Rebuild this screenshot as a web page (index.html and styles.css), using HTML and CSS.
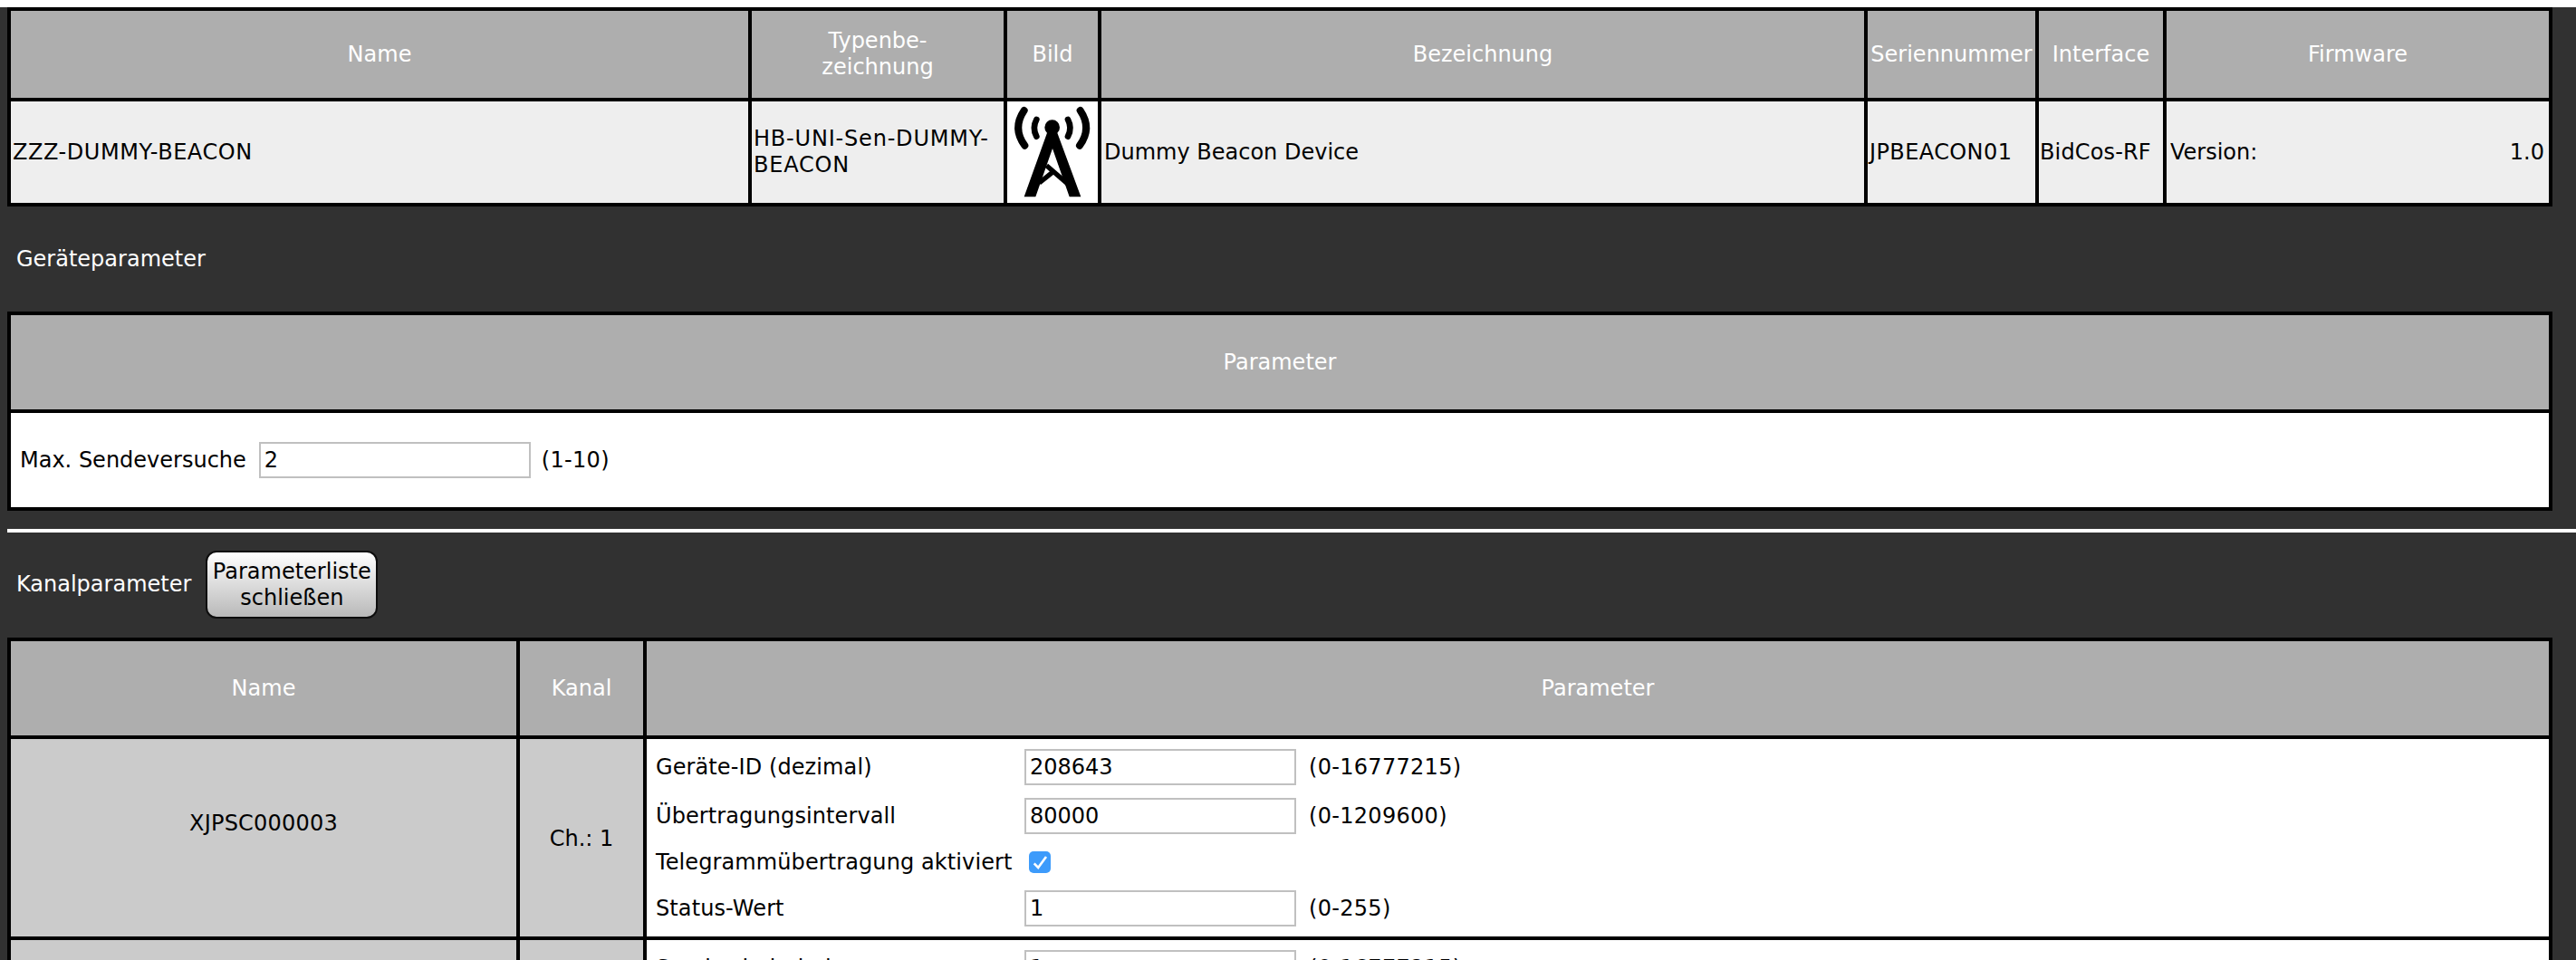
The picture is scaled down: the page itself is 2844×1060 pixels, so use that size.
FILE: index.html
```html
<!DOCTYPE html>
<html lang="de">
<head>
<meta charset="utf-8">
<title>Geräteparameter</title>
<link rel="stylesheet" href="styles.css">
</head>
<body>
<main class="page">
  <table class="grid device">
    <colgroup>
      <col class="d1"><col class="d2"><col class="d3"><col class="d4"><col class="d5"><col class="d6"><col class="d7">
    </colgroup>
    <thead>
      <tr>
        <th>Name</th><th>Typenbe-<br>zeichnung</th><th>Bild</th><th>Bezeichnung</th><th>Seriennummer</th><th>Interface</th><th>Firmware</th>
      </tr>
    </thead>
    <tbody>
      <tr>
        <td class="caps">ZZZ-DUMMY-BEACON</td>
        <td class="caps-wide">HB-UNI-Sen-DUMMY-<br>BEACON</td>
        <td class="pic">
          <svg class="tower" viewBox="96 66 300 336" width="100" height="112" aria-hidden="true">
            <g fill="none" stroke="#000" stroke-linecap="round">
              <path d="M152 96Q112 155 154 212" stroke-width="24"/>
              <path d="M193 126Q178 154 193 182" stroke-width="20"/>
              <path d="M338 96Q378 155 336 212" stroke-width="24"/>
              <path d="M297 126Q312 154 297 182" stroke-width="20"/>
            </g>
            <circle cx="245" cy="152" r="25"/>
            <polygon points="228,170 152,382 190,382 246,222 302,382 340,382 262,170"/>
            <g fill="none" stroke="#000" stroke-width="16">
              <path d="M297 340L226 278"/>
              <path d="M252 296L202 336"/>
            </g>
          </svg>
        </td>
        <td>Dummy Beacon Device</td>
        <td class="serial">JPBEACON01</td>
        <td class="iface">BidCos-RF</td>
        <td><div class="fw"><span>Version:</span><span>1.0</span></div></td>
      </tr>
    </tbody>
  </table>

  <h2 class="title">Geräteparameter</h2>

  <table class="grid params">
    <thead><tr><th>Parameter</th></tr></thead>
    <tbody>
      <tr>
        <td class="white">
          <div class="inline-param">
            <label>Max. Sendeversuche</label>
            <input class="field" type="text" value="2">
            <span class="range-short">(1-10)</span>
          </div>
        </td>
      </tr>
    </tbody>
  </table>

  <div class="rule"></div>

  <div class="channel-head">
    <h2 class="subtitle">Kanalparameter</h2>
    <button class="btn" type="button">Parameterliste<br>schließen</button>
  </div>

  <table class="grid channels">
    <colgroup><col class="c1"><col class="c2"><col class="c3"></colgroup>
    <thead><tr><th>Name</th><th>Kanal</th><th>Parameter</th></tr></thead>
    <tbody>
      <tr>
        <td class="gray"><div class="chname">XJPSC000003</div></td>
        <td class="gray">Ch.: 1</td>
        <td class="white">
          <div class="plist">
            <label>Geräte-ID (dezimal)</label><input class="field" type="text" value="208643"><span class="range">(0-16777215)</span>
            <label>Übertragungsintervall</label><input class="field" type="text" value="80000"><span class="range">(0-1209600)</span>
            <label>Telegrammübertragung aktiviert</label>
            <span class="check"><svg viewBox="0 0 24 24" width="24" height="24" aria-hidden="true"><path d="M5.7 13.3L10.2 18L19 6" fill="none" stroke="#fff" stroke-width="2.6"/></svg></span><span></span>
            <label>Status-Wert</label><input class="field" type="text" value="1"><span class="range">(0-255)</span>
          </div>
        </td>
      </tr>
      <tr>
        <td class="gray"></td>
        <td class="gray"></td>
        <td class="white">
          <div class="plist">
            <label>Sendewiederholung</label><input class="field" type="text" value="1"><span class="range">(0-16777215)</span>
            <label></label><input class="field" type="text" value=""><span></span>
            <label></label><input class="field" type="text" value=""><span></span>
          </div>
        </td>
      </tr>
    </tbody>
  </table>
</main>
</body>
</html>
```
FILE: styles.css
```css
html {
  height: 100%;
  overflow: hidden;
  background: #fff;
}

body {
  margin: 8px 0 0;
  font-family: "DejaVu Sans", Verdana, sans-serif;
  font-size: 24px;
  line-height: 29px;
  color: #000;
}

.page {
  background: #313131;
  padding-left: 8px;
  min-height: 1052px;
}

.grid {
  width: 2810px;
  table-layout: fixed;
  border-collapse: separate;
  border-spacing: 4px;
  background: #000;
}

.grid th,
.grid td {
  padding: 0 2px;
}

.grid th {
  background: #aeaeae;
  color: #fff;
  font-weight: normal;
  text-align: center;
  white-space: nowrap;
}

.device th { height: 96px; padding: 0; }
.device td { height: 112px; background: #eee; }
.device td:nth-child(4) { padding-left: 3px; }
.device td:nth-child(7) { padding: 0 5px 0 4px; }
.device td.pic { background: #fff; padding: 0; line-height: 0; }
.device td.iface { padding-left: 1px; letter-spacing: 0.15px; }

.caps { letter-spacing: 0.55px; }
.caps-wide { letter-spacing: 0.8px; white-space: nowrap; }
.serial { letter-spacing: 0.4px; }

.d1 { width: 814px; }
.d2 { width: 278px; }
.d3 { width: 100px; }
.d4 { width: 842px; }
.d5 { width: 185px; }
.d6 { width: 137px; }
.d7 { width: 422px; }

.c1 { width: 558px; }
.c2 { width: 136px; }
.c3 { width: 2100px; }

.tower { display: block; filter: blur(0.7px); }

.fw {
  display: flex;
  justify-content: space-between;
}

.title,
.subtitle {
  margin: 0;
  font-size: 24px;
  font-weight: normal;
  color: #fff;
}

.title {
  height: 116px;
  padding-left: 10px;
  display: flex;
  align-items: center;
}

.params th { height: 104px; }
.params td { height: 104px; }
.channels th { height: 104px; }

.white { background: #fff; }
.gray { background: #cbcbcb; text-align: center; }
.grid td.gray { padding-top: 2px; }

.inline-param {
  display: flex;
  align-items: center;
  padding-left: 8px;
}

.inline-param label {
  flex: 0 0 249px;
  margin-right: 14px;
  white-space: nowrap;
}

.range-short {
  margin-left: 12px;
  letter-spacing: 0.3px;
}

.field {
  box-sizing: border-box;
  width: 300px;
  height: 40px;
  margin: 0;
  padding: 0 4px;
  border: 2px solid #c0c0c0;
  border-radius: 0;
  background: #fff;
  font: inherit;
  color: #000;
  outline: none;
}

.rule {
  height: 4px;
  margin-top: 20px;
  background: #fff;
}

.channel-head {
  display: flex;
  align-items: center;
  gap: 16px;
  margin: 20px 0 21px;
  padding-left: 10px;
}

.btn {
  box-sizing: border-box;
  width: 190px;
  height: 75px;
  padding: 0;
  border: 2px solid #0d0d0d;
  border-radius: 12px;
  background: linear-gradient(#fff, #b9b9b9);
  font: inherit;
  color: #000;
}

.chname { padding-bottom: 34px; letter-spacing: 0.2px; }

.grid td.white:has(.plist) { padding: 11px 0 11px 10px; }

.plist {
  display: grid;
  grid-template-columns: 407px 300px 1fr;
  row-gap: 14px;
  align-items: center;
}

.plist label { letter-spacing: 0.1px; }

.range { margin-left: 14px; letter-spacing: 0.3px; }

.check {
  display: block;
  width: 24px;
  height: 24px;
  margin: 5px 0 5px 5px;
  border-radius: 5px;
  background: #3d9bfb;
}

.check svg { display: block; }
```
